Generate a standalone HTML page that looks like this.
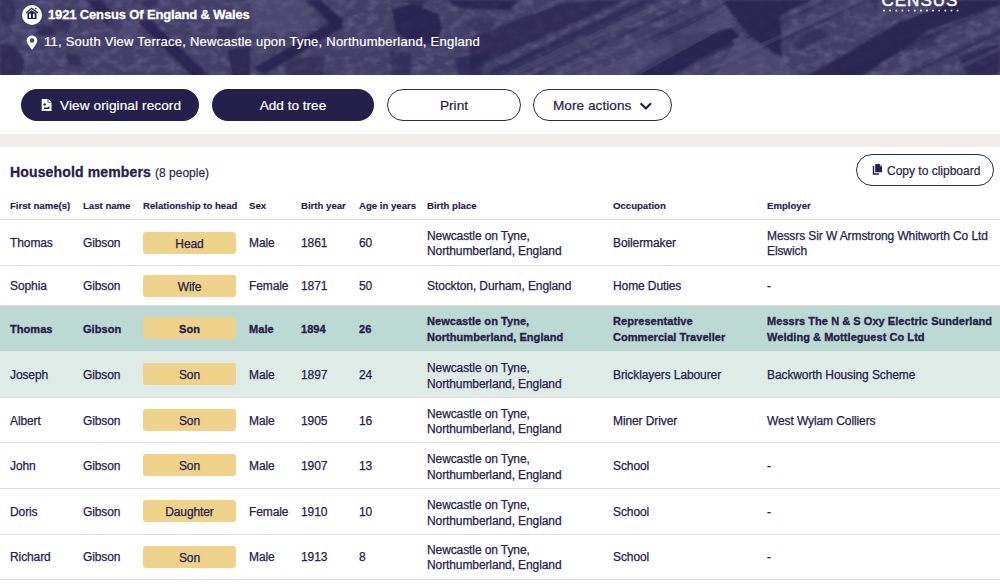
<!DOCTYPE html>
<html><head><meta charset="utf-8">
<style>
*{margin:0;padding:0;box-sizing:border-box}
html,body{width:1000px;height:585px;overflow:hidden;background:#fff;font-family:"Liberation Sans",sans-serif;color:#26224a}
.hdr{position:absolute;left:0;top:0;width:1000px;height:75px;background:#433f67;overflow:hidden}
.hdr svg{position:absolute;left:0;top:0}
.title{position:absolute;left:48px;top:7px;font-size:13px;letter-spacing:-0.15px;-webkit-text-stroke:0.3px #fff;font-weight:bold;color:#fff;white-space:nowrap}
.addr{position:absolute;left:44px;top:34px;font-size:13px;letter-spacing:0.24px;-webkit-text-stroke:0.2px #fff;color:#fff;white-space:nowrap}
.ico-home{position:absolute;left:21.8px;top:5px;width:20px;height:20px;border-radius:50%;background:#fff}
.btn{position:absolute;top:89px;height:32px;border-radius:16px;font-size:13.6px;-webkit-text-stroke:0.2px currentColor;line-height:32px;text-align:center;white-space:nowrap}
.dark{background:#25204b;color:#fff;line-height:34px}
.out{border:1.7px solid #2d2850;color:#26224a;background:#fff;line-height:31.5px}
.strip{position:absolute;left:0;top:134px;width:1000px;height:13px;background:#f1eeea}
.hm{position:absolute;left:10px;top:163.5px;font-size:14px;letter-spacing:0.15px;font-weight:bold;white-space:nowrap;color:#25204b}
.hm{-webkit-text-stroke:0.3px currentColor}
.hm span{font-weight:normal;font-size:12px;letter-spacing:0;-webkit-text-stroke:0.15px currentColor}
.copy{position:absolute;left:856px;top:154px;width:138px;height:32px;border:1.7px solid #2d2850;border-radius:16px;font-size:12px;-webkit-text-stroke:0.2px currentColor;line-height:32px;white-space:nowrap}
.row{position:absolute;left:0;width:1000px}
.row.sel{background:#bdd9d3;font-weight:bold}
.row.sel .c,.row.sel .badge{font-size:11px}
.row.sel .badge{line-height:24.5px}
.row.sel .c,.row.sel .badge{letter-spacing:0.05px;-webkit-text-stroke:0.35px currentColor}
.c.two{transform:translateY(calc(-50% + var(--o) + 0.7px))}
.row.sel .c.two{transform:translateY(calc(-50% + var(--o)))}
.c,.badge{-webkit-text-stroke:0.25px currentColor;letter-spacing:-0.1px}
.row.alt{background:#deebe7}
.ln{position:absolute;left:0;width:1000px;height:1px;background:#dedede}
.c{position:absolute;top:50%;transform:translateY(calc(-50% + var(--o)));font-size:12px;white-space:nowrap;line-height:15.5px}
.th{position:absolute;top:199px;font-size:9.6px;font-weight:bold;white-space:nowrap;line-height:14px;-webkit-text-stroke:0.15px currentColor}
.badge{position:absolute;left:143px;top:50%;margin-top:-11px;width:93px;height:22px;background:#f0d38a;border-radius:3px;text-align:center;font-size:12px;line-height:24.2px}

</style></head><body>
<div class="hdr"><svg width="1000" height="76" viewBox="0 0 1000 76">
<defs><filter id="bl" x="-5%" y="-20%" width="110%" height="140%"><feGaussianBlur stdDeviation="0.8"/></filter>
<filter id="nz" x="0" y="0" width="100%" height="100%"><feTurbulence type="fractalNoise" baseFrequency="0.09 0.14" numOctaves="2" seed="7"/><feColorMatrix type="matrix" values="0 0 0 0 0.16  0 0 0 0 0.14  0 0 0 0 0.29  0 0 0 -2.2 1.25"/></filter></defs>
<rect width="1000" height="76" filter="url(#nz)" opacity="0.6"/>
<g fill="#27224e" filter="url(#bl)">
<polygon points="0,44 14,46 24,60 22,76 0,76" opacity="0.7"/>
<polygon points="0,0 14,0 16,22 6,24 0,18" opacity="0.45"/>
<polygon points="36,25 55,27 54,36 38,35" opacity="0.6"/>
<polygon points="52,18 72,22 70,31 55,29" opacity="0.5"/>
<polygon points="66,54 82,56 80,66 68,64" opacity="0.6"/>
<polygon points="86,0 102,0 124,26 116,34" opacity="0.8"/>
<polygon points="138,22 150,20 210,76 192,76" opacity="0.85"/>
<polygon points="135,0 160,0 150,10" opacity="0.5"/>
<polygon points="216,26 236,28 234,42 218,40" opacity="0.55"/>
<polygon points="228,50 250,46 250,76 232,76" opacity="0.75"/>
<polygon points="307,0 321,0 343,20 341,27 330,24" opacity="0.85"/>
<polygon points="334,20 344,27 265,74 254,68" opacity="0.85"/>
<polygon points="284,58 326,56 322,76 288,76" opacity="0.5"/>
<polygon points="392,9 412,4 438,14 442,30 436,44 410,42 396,32" opacity="0.85"/>
<polygon points="400,0 428,0 420,8" opacity="0.7"/>
<polygon points="445,0 520,0 510,10 462,8" opacity="0.8"/>
<polygon points="390,50 412,52 410,76 392,76" opacity="0.55"/>
<polygon points="455,58 490,52 480,76 458,76" opacity="0.6"/>
<polygon points="470,18 495,20 490,32 466,30" opacity="0.4"/>
<polygon points="470,38 560,4 600,0 625,0 470,70" opacity="0.7"/>
<polygon points="490,70 640,0 660,0 520,76 490,76" opacity="0.45"/>
<polygon points="640,36 700,10 720,14 660,46" opacity="0.45"/>
<polygon points="630,76 670,76 740,36 730,28 665,54" opacity="0.85"/>
<polygon points="670,34 700,32 735,30 730,46 690,58 672,50" opacity="0.6"/>

<polygon points="722,0 812,0 780,15 782,57 752,38 738,22" opacity="0.9"/>
<polygon points="808,76 862,76 930,30 1000,4 1000,0 960,0 900,22" opacity="0.9"/>
<polygon points="870,0 880,0 876,10" opacity="0.5"/>
<polygon points="900,40 940,30 935,45 905,52" opacity="0.35"/>
<polygon points="958,55 1000,44 1000,76 968,76" opacity="0.7"/>
<polygon points="790,40 820,28 830,36 800,50" opacity="0.5"/>
</g>
<g fill="#29244f" opacity="0.45" filter="url(#bl)"><polygon points="480,76 489,76 654,0 645,0"/><polygon points="530,76 537,76 702,0 695,0"/><polygon points="660,76 668,76 833,0 825,0"/><polygon points="700,76 706,76 871,0 865,0"/><polygon points="840,76 847,76 1012,0 1005,0"/><polygon points="900,76 909,76 1074,0 1065,0"/><polygon points="960,76 967,76 1132,0 1125,0"/><polygon points="1010,76 1018,76 1183,0 1175,0"/></g>
<g fill="#57537a" opacity="0.35"><polygon points="500,76 514,76 679,0 665,0"/><polygon points="555,76 565,76 730,0 720,0"/><polygon points="690,76 700,76 865,0 855,0"/><polygon points="880,76 892,76 1057,0 1045,0"/><polygon points="935,76 945,76 1110,0 1100,0"/><polygon points="990,76 1002,76 1167,0 1155,0"/></g>
<g fill="#57537b" opacity="0.45">
<polygon points="250,0 305,0 318,30 252,34"/>
<polygon points="587,76 637,76 735,22 720,10"/>
<polygon points="740,34 782,60 800,76 715,76"/>
<polygon points="108,20 140,18 136,38 110,38"/>
</g>
<g fill="#fff"><text x="881.5" y="6.3" font-family="Liberation Sans" font-size="17" letter-spacing="1" stroke="#fff" stroke-width="0.45">CENSUS</text></g>
<g fill="#fff"><rect x="883.20" y="9.7" width="1.7" height="1.7"/><rect x="889.33" y="9.7" width="1.7" height="1.7"/><rect x="895.46" y="9.7" width="1.7" height="1.7"/><rect x="901.59" y="9.7" width="1.7" height="1.7"/><rect x="907.72" y="9.7" width="1.7" height="1.7"/><rect x="913.85" y="9.7" width="1.7" height="1.7"/><rect x="919.98" y="9.7" width="1.7" height="1.7"/><rect x="926.11" y="9.7" width="1.7" height="1.7"/><rect x="932.24" y="9.7" width="1.7" height="1.7"/><rect x="938.37" y="9.7" width="1.7" height="1.7"/><rect x="944.50" y="9.7" width="1.7" height="1.7"/><rect x="950.63" y="9.7" width="1.7" height="1.7"/><rect x="956.76" y="9.7" width="1.7" height="1.7"/></g></svg></div>
<div class="ico-home"><svg width="20" height="20" viewBox="0 0 20 20"><path d="M4.1 7.9 L9.5 3.3 L15.9 7.9" fill="none" stroke="#25204b" stroke-width="1.3" stroke-linejoin="miter"/><circle cx="13.8" cy="3.6" r="0.8" fill="#25204b"/><path d="M5.4 8.3 L9.5 5.2 L14.5 8.3 V14 H5.4 Z" fill="#25204b"/><rect x="7.1" y="8.7" width="1.8" height="4.2" fill="#fff"/><rect x="10.9" y="8.7" width="1.8" height="4.2" fill="#fff"/></svg></div>
<svg class="pin" width="12" height="16" viewBox="0 0 12 16" style="position:absolute;left:25.5px;top:34.5px"><path d="M6 0.4 C3.1 0.4 0.75 2.7 0.75 5.6 C0.75 7.9 2.2 9.6 3.4 11.3 L6 14.9 L8.6 11.3 C9.8 9.6 11.25 7.9 11.25 5.6 C11.25 2.7 8.9 0.4 6 0.4 Z M6 3.3 A2.25 2.25 0 1 1 6 7.8 A2.25 2.25 0 1 1 6 3.3 Z" fill="#fff" fill-rule="evenodd"/></svg>
<div class="title">1921 Census Of England &amp; Wales</div>
<div class="addr">11, South View Terrace, Newcastle upon Tyne, Northumberland, England</div>
<div class="btn dark" style="left:21px;width:178px"><svg width="12" height="14" viewBox="0 0 12 14" style="position:absolute;left:20px;top:9px"><path d="M0.7 0.9 H6.6 V4.4 H10.5 V13.1 H0.7 Z" fill="#fff"/><path d="M7.4 1.1 L10.3 4 H7.4 Z" fill="#fff"/><circle cx="3.6" cy="6.6" r="1.25" fill="#25204b"/><path d="M3 9.6 V10.9 H8.4 V8 L6.6 9.6 Z" fill="#25204b"/></svg><span style="position:absolute;left:39px;letter-spacing:0.1px">View original record</span></div>
<div class="btn dark" style="left:212px;width:162px">Add to tree</div>
<div class="btn out" style="left:387px;width:134px">Print</div>
<div class="btn out" style="left:533px;width:139px"><span style="position:absolute;left:19px;letter-spacing:0.05px">More actions</span><svg width="14" height="10" viewBox="0 0 14 10" style="position:absolute;left:104.5px;top:11.5px"><path d="M2.3 2 L6.8 6.5 L11.3 2" fill="none" stroke="#25204b" stroke-width="2.2" stroke-linecap="round" stroke-linejoin="round"/></svg></div>
<div class="strip"></div>
<div class="hm">Household members <span>(8 people)</span></div>
<div class="copy"><svg width="13" height="13" viewBox="0 0 13 13" style="position:absolute;left:14px;top:8px"><path d="M4.2 1.1 H8.9 V3.2 H11 V9.3 H4.2 Z" fill="#25204b"/><path d="M9.5 1.2 L11 2.7 H9.5 Z" fill="#25204b"/><path d="M1.8 3 H3.2 V10.3 H8 V11.7 H1.8 Z" fill="#25204b"/></svg><span style="position:absolute;left:30px">Copy to clipboard</span></div>
<div class="th" style="left:10px">First name(s)</div>
<div class="th" style="left:83px">Last name</div>
<div class="th" style="left:143px">Relationship to head</div>
<div class="th" style="left:249px">Sex</div>
<div class="th" style="left:301px">Birth year</div>
<div class="th" style="left:359px">Age in years</div>
<div class="th" style="left:427px">Birth place</div>
<div class="th" style="left:613px">Occupation</div>
<div class="th" style="left:767px">Employer</div>
<div class="ln" style="top:219.0px"></div>
<div class="row" style="top:219.5px;height:46.0px;--o:0.8px"><div class="c" style="left:10px">Thomas</div><div class="c" style="left:83px">Gibson</div><div class="c" style="left:249px">Male</div><div class="c" style="left:301px">1861</div><div class="c" style="left:359px">60</div><div class="c two" style="left:427px">Newcastle on Tyne,<br>Northumberland, England</div><div class="c" style="left:613px">Boilermaker</div><div class="c two" style="left:767px">Messrs Sir W Armstrong Whitworth Co Ltd<br>Elswich</div><div class="badge">Head</div></div>
<div class="ln" style="top:265.0px"></div>
<div class="row" style="top:265.5px;height:40.0px;--o:0.9px"><div class="c" style="left:10px">Sophia</div><div class="c" style="left:83px">Gibson</div><div class="c" style="left:249px">Female</div><div class="c" style="left:301px">1871</div><div class="c" style="left:359px">50</div><div class="c" style="left:427px">Stockton, Durham, England</div><div class="c" style="left:613px">Home Duties</div><div class="c" style="left:767px">-</div><div class="badge">Wife</div></div>
<div class="ln" style="top:305.0px"></div>
<div class="row sel" style="top:305.5px;height:45.5px;--o:1.5px"><div class="c" style="left:10px">Thomas</div><div class="c" style="left:83px">Gibson</div><div class="c" style="left:249px">Male</div><div class="c" style="left:301px">1894</div><div class="c" style="left:359px">26</div><div class="c two" style="left:427px">Newcastle on Tyne,<br>Northumberland, England</div><div class="c two" style="left:613px">Representative<br>Commercial Traveller</div><div class="c two" style="left:767px">Messrs The N &amp; S Oxy Electric Sunderland<br>Welding &amp; Mottleguest Co Ltd</div><div class="badge">Son</div></div>
<div class="ln" style="top:350.5px"></div>
<div class="row alt" style="top:351px;height:46px;--o:1.8px"><div class="c" style="left:10px">Joseph</div><div class="c" style="left:83px">Gibson</div><div class="c" style="left:249px">Male</div><div class="c" style="left:301px">1897</div><div class="c" style="left:359px">24</div><div class="c two" style="left:427px">Newcastle on Tyne,<br>Northumberland, England</div><div class="c" style="left:613px">Bricklayers Labourer</div><div class="c" style="left:767px">Backworth Housing Scheme</div><div class="badge">Son</div></div>
<div class="ln" style="top:396.5px"></div>
<div class="row" style="top:397px;height:45.5px;--o:1.8px"><div class="c" style="left:10px">Albert</div><div class="c" style="left:83px">Gibson</div><div class="c" style="left:249px">Male</div><div class="c" style="left:301px">1905</div><div class="c" style="left:359px">16</div><div class="c two" style="left:427px">Newcastle on Tyne,<br>Northumberland, England</div><div class="c" style="left:613px">Miner Driver</div><div class="c" style="left:767px">West Wylam Colliers</div><div class="badge">Son</div></div>
<div class="ln" style="top:442.0px"></div>
<div class="row" style="top:442.5px;height:45.69999999999999px;--o:1.7px"><div class="c" style="left:10px">John</div><div class="c" style="left:83px">Gibson</div><div class="c" style="left:249px">Male</div><div class="c" style="left:301px">1907</div><div class="c" style="left:359px">13</div><div class="c two" style="left:427px">Newcastle on Tyne,<br>Northumberland, England</div><div class="c" style="left:613px">School</div><div class="c" style="left:767px">-</div><div class="badge">Son</div></div>
<div class="ln" style="top:487.7px"></div>
<div class="row" style="top:488.2px;height:45.80000000000001px;--o:1.7px"><div class="c" style="left:10px">Doris</div><div class="c" style="left:83px">Gibson</div><div class="c" style="left:249px">Female</div><div class="c" style="left:301px">1910</div><div class="c" style="left:359px">10</div><div class="c two" style="left:427px">Newcastle on Tyne,<br>Northumberland, England</div><div class="c" style="left:613px">School</div><div class="c" style="left:767px">-</div><div class="badge">Daughter</div></div>
<div class="ln" style="top:533.5px"></div>
<div class="row" style="top:534px;height:45.5px;--o:1.2px"><div class="c" style="left:10px">Richard</div><div class="c" style="left:83px">Gibson</div><div class="c" style="left:249px">Male</div><div class="c" style="left:301px">1913</div><div class="c" style="left:359px">8</div><div class="c two" style="left:427px">Newcastle on Tyne,<br>Northumberland, England</div><div class="c" style="left:613px">School</div><div class="c" style="left:767px">-</div><div class="badge">Son</div></div>
<div class="ln" style="top:579.0px"></div>
</body></html>
